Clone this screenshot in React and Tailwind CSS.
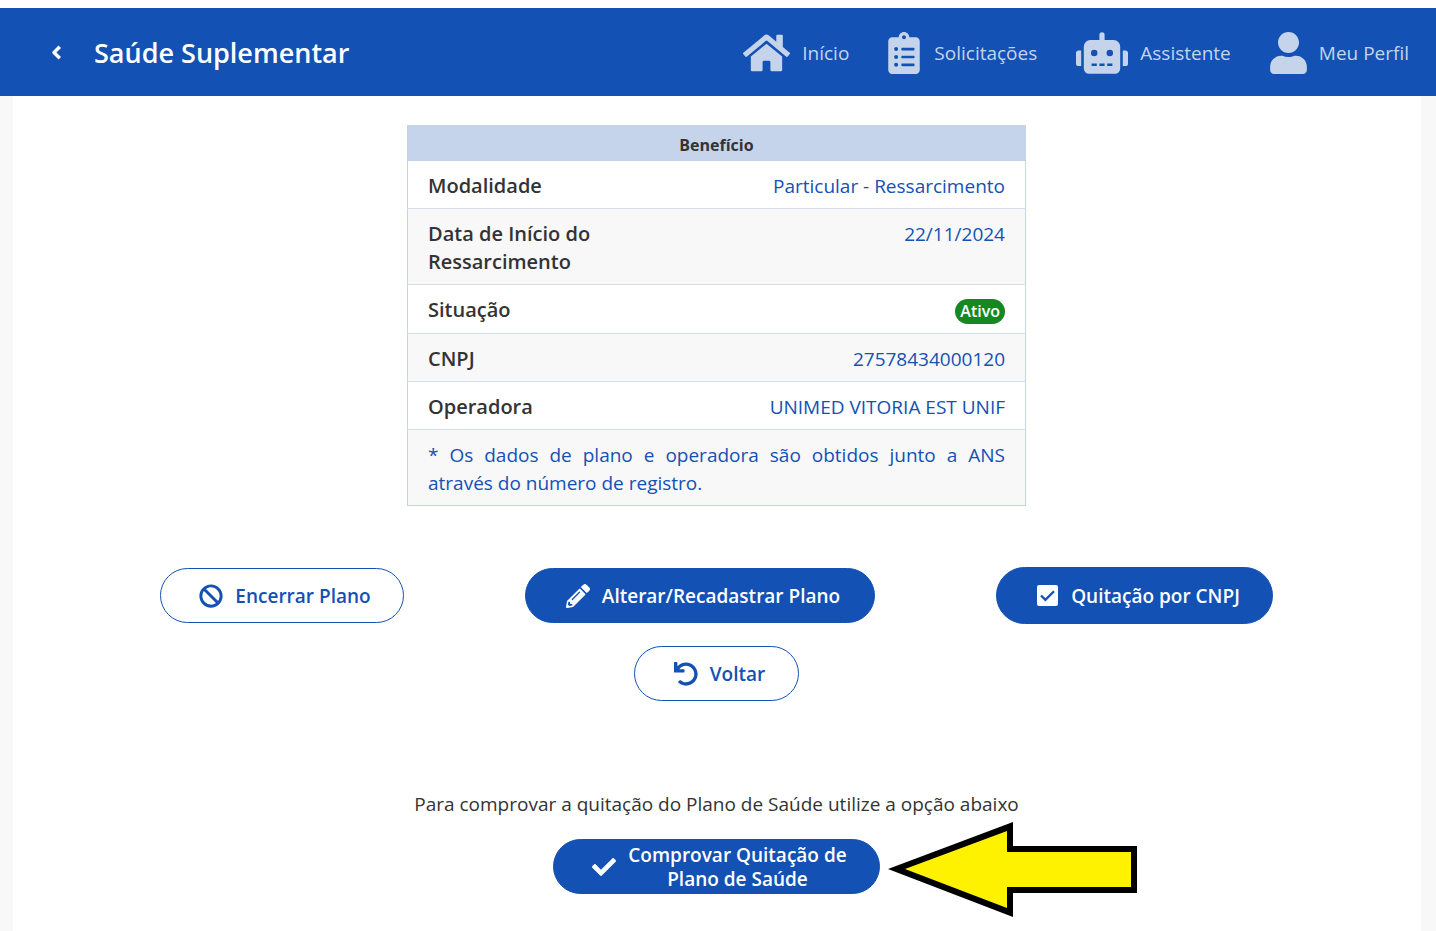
import React from 'react';
import clsx from 'clsx';
import { FaBan, FaCheck, FaClipboardList, FaHome, FaPencilAlt, FaRobot, FaUndo, FaUser } from 'react-icons/fa';

const navItems = [
  { label: 'Início', icon: FaHome, iconClass: 'w-[47px]', gapClass: 'gap-3' },
  { label: 'Solicitações', icon: FaClipboardList, iconClass: 'w-8', gapClass: 'gap-[14px]' },
  { label: 'Assistente', icon: FaRobot, iconClass: 'w-[52px]', gapClass: 'gap-3' },
  { label: 'Meu Perfil', icon: FaUser, iconClass: 'w-[37px]', gapClass: 'gap-3' }
];

const benefitRows = [
  { label: 'Modalidade', value: 'Particular - Ressarcimento' },
  { label: 'Data de Início do Ressarcimento', value: '22/11/2024' },
  { label: 'Situação', value: 'Ativo', isBadge: true },
  { label: 'CNPJ', value: '27578434000120' },
  { label: 'Operadora', value: 'UNIMED VITORIA EST UNIF' }
];

const BackIcon = ({ className }) => (
  <svg className={className} viewBox="0 0 12 16" fill="none" stroke="currentColor" strokeWidth="3.5" aria-hidden="true">
    <path d="M9.8 1.8 4 7.5l5.8 5.7" strokeLinejoin="round" />
  </svg>
);

const CheckSquareIcon = ({ className }) => (
  <svg className={className} viewBox="0 0 24 24" aria-hidden="true">
    <rect x="2" y="1" width="21" height="21" rx="2" fill="currentColor" />
    <path d="m6 11.5 4.4 4.4 8.6-8.6" fill="none" stroke="#1351b4" strokeWidth="2.3" />
  </svg>
);

const Header = () => (
  <header className="mt-2 flex h-[88px] items-center justify-between bg-[#1351b4] pt-0.5 pr-[27px] pl-[50px] text-white">
    <div className="flex items-center gap-8">
      <button type="button" aria-label="Voltar" className="cursor-pointer">
        <BackIcon className="h-4 w-3" />
      </button>
      <h1 className="text-[27px] font-semibold">Saúde Suplementar</h1>
    </div>

    <nav className="flex items-center gap-[39px] text-[19px] text-[#c5d4eb]">
      {navItems.map(({ label, icon: Icon, iconClass, gapClass }) => (
        <a key={label} href="#" className={clsx('flex items-center', gapClass)}>
          <Icon className={clsx('h-[42px]', iconClass)} />
          {label}
        </a>
      ))}
    </nav>
  </header>
);

const BenefitTable = () => (
  <table className="w-full max-w-[619px] border-collapse border border-[#c5d4eb] text-[19px] leading-7 text-[#1351b4]">
    <thead>
      <tr>
        <th colSpan={2} className="bg-[#c5d4eb] pt-[7px] pb-1 text-base leading-6 font-bold text-[#333333]">
          Benefício
        </th>
      </tr>
    </thead>
    <tbody>
      {benefitRows.map(({ label, value, isBadge }) => (
        <tr
          key={label}
          className={clsx('border-b border-[#d5deeb] align-top even:bg-[#f8f8f8]', isBadge && 'h-[49px]')}
        >
          <th scope="row" className="w-[210px] pt-[11px] pb-2 pl-5 text-left text-[20px] leading-7 font-semibold text-[#333333]">
            {label}
          </th>
          <td className="pt-[11px] pr-5 pb-2 text-right">
            {isBadge ? (
              <span className="inline-block rounded-full bg-[#168821] px-[5px] text-base leading-[25px] font-semibold text-white">
                {value}
              </span>
            ) : (
              value
            )}
          </td>
        </tr>
      ))}
      <tr className="bg-[#f8f8f8]">
        <td colSpan={2} className="px-5 pt-[11px] pb-2 text-justify">
          * Os dados de plano e operadora são obtidos junto a ANS através do número de registro.
        </td>
      </tr>
    </tbody>
  </table>
);

const PillButton = ({ icon: Icon, outlined = false, className, children }) => (
  <button
    type="button"
    className={clsx(
      'flex cursor-pointer items-center justify-center gap-3 rounded-full border border-[#1351b4] pl-[6px] text-[19px] leading-6 font-semibold',
      outlined ? 'bg-white text-[#1351b4]' : 'bg-[#1351b4] text-white',
      className
    )}
  >
    <Icon className="size-6 shrink-0" />
    <span>{children}</span>
  </button>
);

const Arrow = () => (
  <svg
    className="absolute -top-[17px] left-full ml-2 h-24 w-[250px]"
    viewBox="0 0 250 96"
    aria-hidden="true"
  >
    <polygon points="0,47 125,0 125,24 249,24 249,71 125,71 125,95" fill="#000000" />
    <polygon points="17,47 119,9 119,30 243,30 243,65 119,65 119,86" fill="#fff200" />
  </svg>
);

const App = () => (
  <div
    className="flex min-h-screen flex-col overflow-x-hidden bg-white"
    style={{ fontFamily: '"Open Sans", "Noto Sans", sans-serif' }}
  >
    <Header />

    <div className="flex grow bg-[#f8f8f8] pr-[15px] pl-[13px]">
      <main className="flex w-full flex-col items-center bg-white pt-[29px] pr-px">
        <BenefitTable />

        <div className="mt-[61px] flex w-full items-center justify-evenly px-[26px]">
          <PillButton icon={FaBan} outlined className="h-[55px] w-[244px]">
            Encerrar Plano
          </PillButton>
          <PillButton icon={FaPencilAlt} className="h-[55px] w-[350px]">
            Alterar/Recadastrar Plano
          </PillButton>
          <PillButton icon={CheckSquareIcon} className="h-[57px] w-[277px]">
            Quitação por CNPJ
          </PillButton>
        </div>

        <PillButton icon={FaUndo} outlined className="mt-[22px] h-[55px] w-[165px]">
          Voltar
        </PillButton>

        <p className="mt-[89px] text-[19px] leading-7 text-[#333333]">
          Para comprovar a quitação do Plano de Saúde utilize a opção abaixo
        </p>

        <div className="relative mt-[21px]">
          <PillButton icon={FaCheck} className="h-[55px] w-[327px]">
            Comprovar Quitação de
            <br />
            Plano de Saúde
          </PillButton>
          <Arrow />
        </div>
      </main>
    </div>
  </div>
);

export default App;
